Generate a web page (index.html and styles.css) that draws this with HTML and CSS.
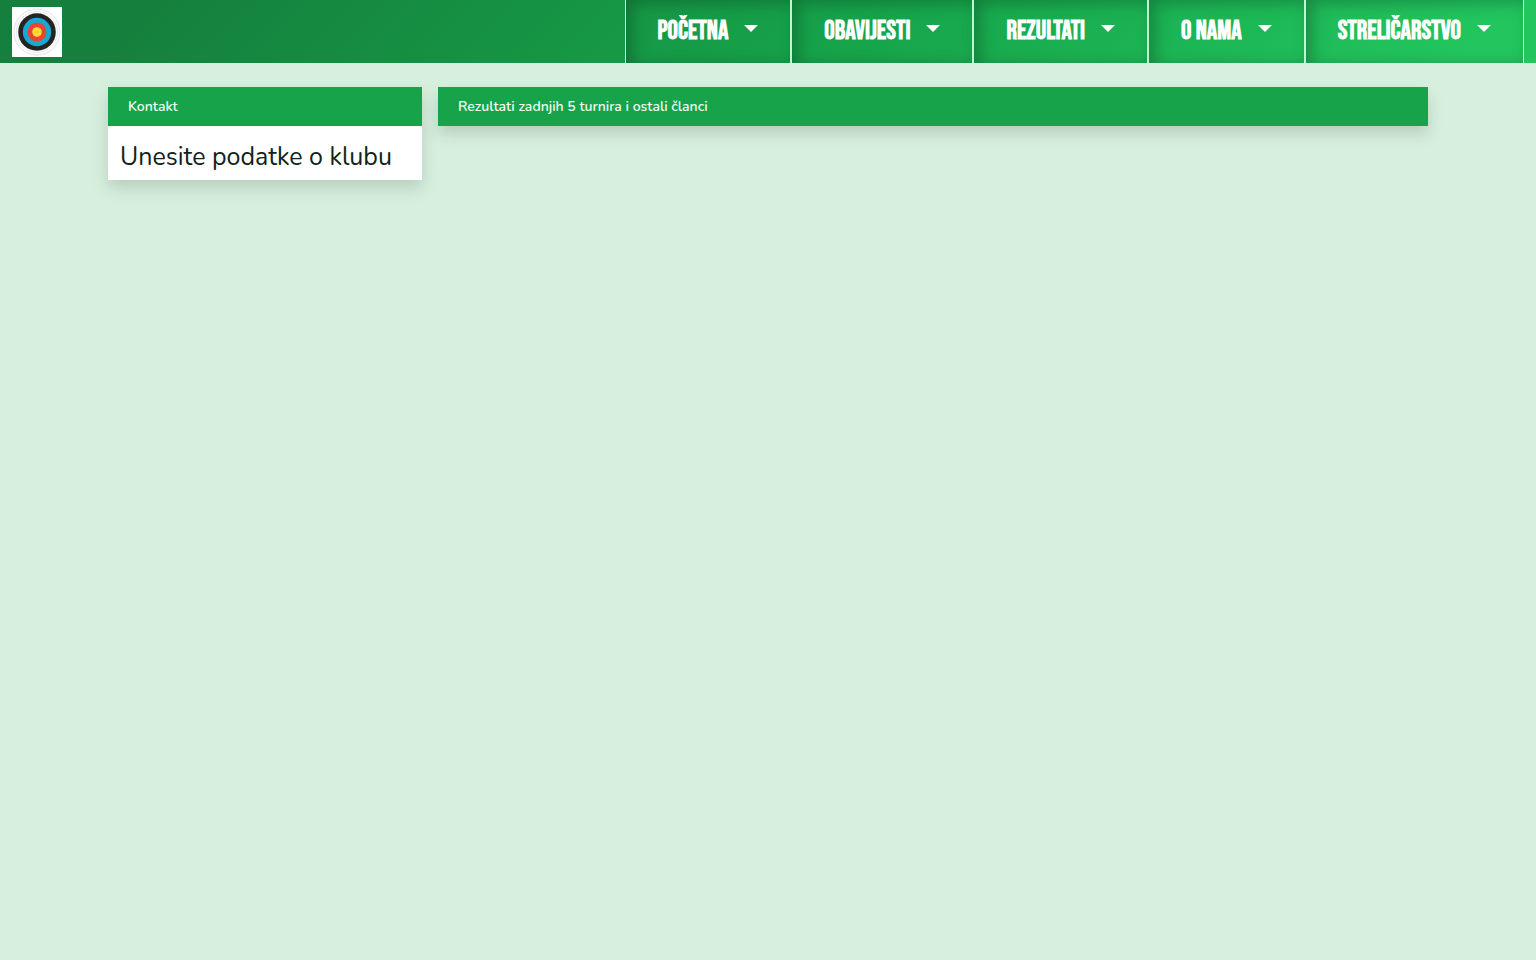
FILE: index.html
```
<!DOCTYPE html>
<html lang="hr">

<head>
    <meta charset="UTF-8">
    <meta name="viewport" content="width=device-width, initial-scale=1.0">
    <title>Streličarski klub</title>
    <link rel="stylesheet" href="styles.css">
</head>

<body>

    <header class="navbar">
        <a href="#" class="logo" aria-label="Početna stranica">
            <svg viewBox="0 0 50 50" width="50" height="50">
                <rect width="50" height="50" fill="#fff" />
                <circle cx="25" cy="25" r="23" fill="#fff" stroke="#e2e2e2" />
                <circle cx="25" cy="25" r="20.5" fill="#fff" stroke="#e8e8e8" />
                <circle cx="25" cy="25" r="18.8" fill="#242424" />
                <circle cx="25" cy="25" r="14.2" fill="#17a9d2" />
                <circle cx="25" cy="25" r="9.4" fill="#e8442f" />
                <circle cx="25" cy="25" r="4.8" fill="#fbd93a" />
                <path d="M24 25h2M25 24v2" stroke="#e0b030" stroke-width=".5" />
            </svg>
        </a>
        <nav class="menu">
            <button type="button" class="menu-item">POČETNA</button>
            <button type="button" class="menu-item">OBAVIJESTI</button>
            <button type="button" class="menu-item">REZULTATI</button>
            <button type="button" class="menu-item">O NAMA</button>
            <button type="button" class="menu-item">STRELIČARSTVO</button>
        </nav>
    </header>

    <main class="container">
        <aside class="col-side">
            <section class="card">
                <div class="card-header">Kontakt</div>
                <div class="card-body">
                    <h1>Unesite podatke o klubu</h1>
                </div>
            </section>
        </aside>
        <div class="col-main">
            <section class="card">
                <div class="card-header">Rezultati zadnjih 5 turnira i ostali članci</div>
            </section>
        </div>
    </main>

</body>

</html>
```
FILE: styles.css
```
* {
    box-sizing: border-box;
}

body {
    margin: 0;
    min-height: 100vh;
    background: #d7f0de;
    color: #10231a;
    font-family: 'Nunito', 'Lato', sans-serif;
}

.navbar {
    display: flex;
    justify-content: space-between;
    align-items: stretch;
    min-height: 63px;
    padding: 0 12px;
    background: linear-gradient(135deg, #15803d 10%, #16a34a 55%, #22c55e 95%);
}

.logo {
    display: flex;
    align-items: center;
}

.logo svg {
    display: block;
}

.menu {
    display: flex;
}

.menu-item {
    display: flex;
    align-items: center;
    gap: 16px;
    margin: 0;
    padding: 0 32px;
    border: solid #bbf7d0;
    border-width: 0 1px;
    background: none;
    box-shadow: inset 6px 3px 16px rgba(0, 0, 0, 0.25);
    color: #fff;
    font-family: 'Bebas Neue', 'Liberation Sans Narrow', sans-serif;
    font-size: 26px;
    font-weight: bold;
    cursor: pointer;
}

.menu-item::after {
    content: "";
    margin-bottom: 6px;
    border-top: 7px solid;
    border-left: 7px solid transparent;
    border-right: 7px solid transparent;
}

.container {
    display: flex;
    max-width: 1320px;
    margin: 24px auto 0;
}

.col-side {
    width: 25%;
    padding-right: 16px;
}

.col-main {
    width: 75%;
}

.card {
    background: #fff;
    box-shadow: 0 8px 16px rgba(0, 0, 0, 0.15);
}

.card-header {
    padding: 10px 20px 9px;
    background: #16a34a;
    color: #f0fdf4;
    font-size: 14px;
    font-weight: 600;
    line-height: 20px;
}

.card-body {
    padding: 16px 12px 8px;
}

.card-body h1 {
    margin: 0;
    font-size: 25px;
    font-weight: normal;
    line-height: 30px;
}
```
